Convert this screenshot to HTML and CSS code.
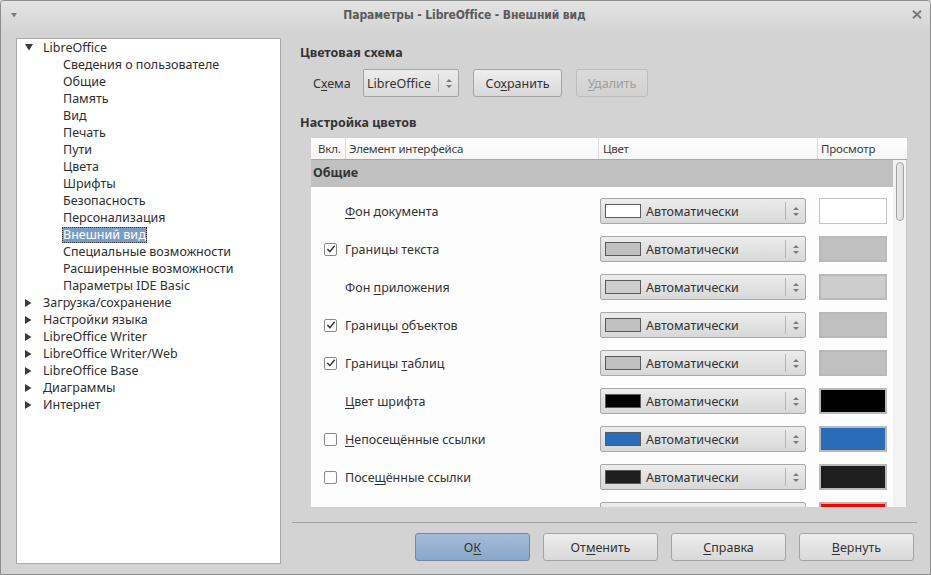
FILE: index.html
```html
<!DOCTYPE html>
<html lang="ru">
<head>
<meta charset="utf-8">
<title>Параметры - LibreOffice - Внешний вид</title>
<link rel="stylesheet" href="styles.css">
</head>
<body>
<div class="window">
  <div class="titlebar">
    <svg class="tb-menu" width="6" height="5" viewBox="0 0 6 5"><path d="M0 0H6L3 4.5Z" fill="#7a7a7a"/></svg>
    <span class="tb-title">Параметры - LibreOffice - Внешний вид</span>
    <svg class="tb-close" width="10" height="9" viewBox="0 0 10 9"><path d="M1 0.8L9 8.2M9 0.8L1 8.2" stroke="#7a7a7a" stroke-width="2"/></svg>
  </div>
  <div class="content">
    <div class="tree">
      <div class="node l0"><span class="tw"><svg width="8" height="7" viewBox="0 0 8 7"><path d="M0 0H8L4 6.5Z" fill="#3c3c3c"/></svg></span>LibreOffice</div>
      <div class="node l1">Сведения о пользователе</div>
      <div class="node l1">Общие</div>
      <div class="node l1">Память</div>
      <div class="node l1">Вид</div>
      <div class="node l1">Печать</div>
      <div class="node l1">Пути</div>
      <div class="node l1">Цвета</div>
      <div class="node l1">Шрифты</div>
      <div class="node l1">Безопасность</div>
      <div class="node l1">Персонализация</div>
      <div class="node l1 sel"><span class="hl">Внешний вид</span></div>
      <div class="node l1">Специальные возможности</div>
      <div class="node l1">Расширенные возможности</div>
      <div class="node l1">Параметры IDE Basic</div>
      <div class="node l0"><span class="tw"><svg width="7" height="8" viewBox="0 0 7 8"><path d="M0 0V8L6.5 4Z" fill="#3c3c3c"/></svg></span>Загрузка/сохранение</div>
      <div class="node l0"><span class="tw"><svg width="7" height="8" viewBox="0 0 7 8"><path d="M0 0V8L6.5 4Z" fill="#3c3c3c"/></svg></span>Настройки языка</div>
      <div class="node l0"><span class="tw"><svg width="7" height="8" viewBox="0 0 7 8"><path d="M0 0V8L6.5 4Z" fill="#3c3c3c"/></svg></span>LibreOffice Writer</div>
      <div class="node l0"><span class="tw"><svg width="7" height="8" viewBox="0 0 7 8"><path d="M0 0V8L6.5 4Z" fill="#3c3c3c"/></svg></span>LibreOffice Writer/Web</div>
      <div class="node l0"><span class="tw"><svg width="7" height="8" viewBox="0 0 7 8"><path d="M0 0V8L6.5 4Z" fill="#3c3c3c"/></svg></span>LibreOffice Base</div>
      <div class="node l0"><span class="tw"><svg width="7" height="8" viewBox="0 0 7 8"><path d="M0 0V8L6.5 4Z" fill="#3c3c3c"/></svg></span>Диаграммы</div>
      <div class="node l0"><span class="tw"><svg width="7" height="8" viewBox="0 0 7 8"><path d="M0 0V8L6.5 4Z" fill="#3c3c3c"/></svg></span>Интернет</div>
    </div>

    <div class="pane">
      <div class="heading">Цветовая схема</div>
      <div class="scheme-row">
        <span class="lbl">С<u>х</u>ема</span>
        <div class="combo">
          <span class="combo-text">LibreOffice</span>
          <span class="spin"><svg width="6" height="11" viewBox="0 0 6 11"><path d="M0 4L3 1L6 4Z M0 7L3 10L6 7Z" fill="#7a7a7a"/></svg></span>
        </div>
        <button class="btn save">Со<u>х</u>ранить</button>
        <button class="btn del" disabled><u>У</u>далить</button>
      </div>
      <div class="heading h2">Настройка цветов</div>

      <div class="table">
        <div class="thead">
          <div class="th c1">Вкл.</div>
          <div class="th c2">Элемент интерфейса</div>
          <div class="th c3">Цвет</div>
          <div class="th c4">Просмотр</div>
        </div>
        <div class="tbody">
          <div class="rows">
            <div class="group">Общие</div>
            <div class="list">
              <div class="row">
                <div class="chk-cell"></div>
                <div class="label"><u>Ф</u>он документа</div>
                <div class="lb"><span class="sw" style="background:#ffffff"></span><span class="lb-text">Автоматически</span><span class="spin"><svg width="6" height="11" viewBox="0 0 6 11"><path d="M0 4L3 1L6 4Z M0 7L3 10L6 7Z" fill="#7a7a7a"/></svg></span></div>
                <div class="pv white" style="background:#ffffff"></div>
              </div>
              <div class="row">
                <div class="chk-cell"><span class="chk on"><svg width="11" height="10" viewBox="0 0 11 10"><path d="M1.5 5L4.3 8L9.5 1.5" fill="none" stroke="#333" stroke-width="1.6"/></svg></span></div>
                <div class="label">Границы текста</div>
                <div class="lb"><span class="sw" style="background:#c0c0c0"></span><span class="lb-text">Автоматически</span><span class="spin"><svg width="6" height="11" viewBox="0 0 6 11"><path d="M0 4L3 1L6 4Z M0 7L3 10L6 7Z" fill="#7a7a7a"/></svg></span></div>
                <div class="pv" style="background:#c0c0c0"></div>
              </div>
              <div class="row">
                <div class="chk-cell"></div>
                <div class="label">Фон <u>п</u>риложения</div>
                <div class="lb"><span class="sw" style="background:#cdcdcd"></span><span class="lb-text">Автоматически</span><span class="spin"><svg width="6" height="11" viewBox="0 0 6 11"><path d="M0 4L3 1L6 4Z M0 7L3 10L6 7Z" fill="#7a7a7a"/></svg></span></div>
                <div class="pv" style="background:#cdcdcd"></div>
              </div>
              <div class="row">
                <div class="chk-cell"><span class="chk on"><svg width="11" height="10" viewBox="0 0 11 10"><path d="M1.5 5L4.3 8L9.5 1.5" fill="none" stroke="#333" stroke-width="1.6"/></svg></span></div>
                <div class="label">Границы <u>о</u>бъектов</div>
                <div class="lb"><span class="sw" style="background:#c0c0c0"></span><span class="lb-text">Автоматически</span><span class="spin"><svg width="6" height="11" viewBox="0 0 6 11"><path d="M0 4L3 1L6 4Z M0 7L3 10L6 7Z" fill="#7a7a7a"/></svg></span></div>
                <div class="pv" style="background:#c0c0c0"></div>
              </div>
              <div class="row">
                <div class="chk-cell"><span class="chk on"><svg width="11" height="10" viewBox="0 0 11 10"><path d="M1.5 5L4.3 8L9.5 1.5" fill="none" stroke="#333" stroke-width="1.6"/></svg></span></div>
                <div class="label">Границы <u>т</u>аблиц</div>
                <div class="lb"><span class="sw" style="background:#c0c0c0"></span><span class="lb-text">Автоматически</span><span class="spin"><svg width="6" height="11" viewBox="0 0 6 11"><path d="M0 4L3 1L6 4Z M0 7L3 10L6 7Z" fill="#7a7a7a"/></svg></span></div>
                <div class="pv" style="background:#c0c0c0"></div>
              </div>
              <div class="row">
                <div class="chk-cell"></div>
                <div class="label"><u>Ц</u>вет шрифта</div>
                <div class="lb"><span class="sw" style="background:#000000"></span><span class="lb-text">Автоматически</span><span class="spin"><svg width="6" height="11" viewBox="0 0 6 11"><path d="M0 4L3 1L6 4Z M0 7L3 10L6 7Z" fill="#7a7a7a"/></svg></span></div>
                <div class="pv" style="background:#000000"></div>
              </div>
              <div class="row">
                <div class="chk-cell"><span class="chk"></span></div>
                <div class="label"><u>Н</u>епосещённые ссылки</div>
                <div class="lb"><span class="sw" style="background:#2a6cb8"></span><span class="lb-text">Автоматически</span><span class="spin"><svg width="6" height="11" viewBox="0 0 6 11"><path d="M0 4L3 1L6 4Z M0 7L3 10L6 7Z" fill="#7a7a7a"/></svg></span></div>
                <div class="pv" style="background:#2a6cb8"></div>
              </div>
              <div class="row">
                <div class="chk-cell"><span class="chk"></span></div>
                <div class="label">Посе<u>щ</u>ённые ссылки</div>
                <div class="lb"><span class="sw" style="background:#1e1e1e"></span><span class="lb-text">Автоматически</span><span class="spin"><svg width="6" height="11" viewBox="0 0 6 11"><path d="M0 4L3 1L6 4Z M0 7L3 10L6 7Z" fill="#7a7a7a"/></svg></span></div>
                <div class="pv" style="background:#1e1e1e"></div>
              </div>
              <div class="row">
                <div class="chk-cell"></div>
                <div class="label"></div>
                <div class="lb"></div>
                <div class="pv" style="background:#ff0000"></div>
              </div>
            </div>
          </div>
          <div class="scrollbar"><div class="thumb"></div></div>
        </div>
      </div>

      <div class="sep"></div>
      <div class="buttons">
        <button class="btn big ok">О<u>К</u></button>
        <button class="btn big">От<u>м</u>енить</button>
        <button class="btn big"><u>С</u>правка</button>
        <button class="btn big"><u>В</u>ернуть</button>
      </div>
    </div>
  </div>
</div>
</body>
</html>
```

FILE: styles.css
```css
* { box-sizing: border-box; }

html, body {
  margin: 0;
  padding: 0;
  background: #d3d3d3;
}

body {
  font-family: "Noto Sans", "Open Sans", "DejaVu Sans", sans-serif;
  font-size: 12.5px;
  color: #333333;
}

u { text-decoration: underline; text-underline-offset: 2px; }

.window {
  width: 931px;
  height: 575px;
  border: 1px solid #8d8d8d;
  border-radius: 4px 4px 0 0;
  background: #d3d3d3;
  display: flex;
  flex-direction: column;
  overflow: hidden;
}

.titlebar {
  height: 28px;
  flex: none;
  display: flex;
  align-items: center;
  background: linear-gradient(#e3e3e3, #d5d5d5);
  padding: 0 8px 0 10px;
}

.tb-menu { flex: none; margin-top: 1px; }

.tb-title {
  flex: 1;
  text-align: center;
  font-family: "DejaVu Sans Condensed", "DejaVu Sans", sans-serif;
  font-stretch: condensed;
  font-weight: bold;
  font-size: 12px;
  color: #5a5a5a;
  letter-spacing: -0.1px;
}

.tb-close { flex: none; margin-top: -1px; }

.content {
  flex: 1;
  display: flex;
  padding: 9px 13px 0 15px;
}

/* tree */
.tree {
  width: 265px;
  height: 526px;
  flex: none;
  background: #ffffff;
  border: 1px solid #a9a9a9;
  color: #2f2f2f;
}

.node {
  height: 17px;
  line-height: 17px;
  white-space: nowrap;
  display: flex;
  align-items: center;
}

.node.l0 { padding-left: 8px; }
.node.l1 { padding-left: 46px; }
.node.sel { padding-left: 45px; }

.tw {
  width: 18px;
  flex: none;
  display: flex;
  align-items: center;
}

.hl {
  background: #7b9cc7;
  color: #ffffff;
  padding: 0 1px;
  outline: 1px dotted #333;
  outline-offset: -1px;
  line-height: 16px;
}

/* right pane */
.pane {
  flex: 1;
  margin-left: 11px;
  display: flex;
  flex-direction: column;
}

.heading {
  font-weight: bold;
  line-height: 16px;
  margin-top: 7px;
  padding-left: 8px;
  color: #333;
}

.heading.h2 { margin-top: 18px; }

.scheme-row {
  margin-top: 8px;
  height: 28px;
  display: flex;
  align-items: center;
  padding-left: 21px;
}

.lbl { width: 50px; flex: none; }

.combo {
  width: 96px;
  height: 28px;
  border: 1px solid #a4a4a4;
  border-radius: 2px;
  background: linear-gradient(#ececec, #dadada);
  display: flex;
  align-items: center;
  margin-right: 14px;
}

.combo-text { flex: 1; padding-left: 3px; }

.combo .spin {
  width: 20px;
  height: 18px;
  border-left: 1px solid #b5b5b5;
  display: flex;
  align-items: center;
  justify-content: center;
}

.btn {
  font-family: inherit;
  font-size: 12.5px;
  color: #333;
  height: 28px;
  border: 1px solid #a5a5a5;
  border-radius: 3px;
  background: linear-gradient(#eeeeee, #d8d8d8);
  padding: 0;
}

.btn.save { width: 89px; margin-right: 14px; }
.btn.del {
  width: 72px;
  color: #9d9d9d;
  border-color: #bdbdbd;
  background: linear-gradient(#dadada, #d2d2d2);
}

/* table */
.table {
  margin-top: 7px;
  margin-left: 19px;
  width: 596px;
  height: 369px;
  display: flex;
  flex-direction: column;
  background: #ffffff;
}

.thead {
  height: 22px;
  flex: none;
  display: flex;
  background: linear-gradient(#ffffff, #f6f6f6);
  border-bottom: 1px solid #a8a8a8;
}

.th {
  line-height: 21px;
  font-size: 11.5px;
  color: #3c3c3c;
  border-right: 1px solid #dadada;
  white-space: nowrap;
  letter-spacing: -0.2px;
}

.th.c1 { width: 35px; padding-left: 7px; }
.th.c2 { width: 253px; padding-left: 3px; }
.th.c3 { width: 219px; padding-left: 4px; }
.th.c4 { flex: 1; padding-left: 3px; border-right: none; }

.tbody {
  flex: 1;
  display: flex;
  overflow: hidden;
}

.rows {
  flex: 1;
  overflow: hidden;
  background: #fdfdfd;
}

.group {
  height: 27px;
  line-height: 26px;
  background: #c0c0c0;
  font-weight: bold;
  padding-left: 2px;
  color: #333;
}

.list { padding-top: 5px; }

.row {
  height: 38px;
  display: grid;
  grid-template-columns: 34px 255px 219px 68px;
  align-items: center;
}

.chk-cell { padding-left: 13px; display: flex; align-items: center; }

.chk {
  width: 13px;
  height: 13px;
  border: 1px solid #8a8a8a;
  border-radius: 2px;
  background: #ffffff;
  display: flex;
  align-items: center;
  justify-content: center;
}

.chk.on svg { margin-top: -1px; margin-left: 1px; }

.label { color: #333; white-space: nowrap; }

.lb {
  width: 206px;
  height: 26px;
  border: 1px solid #a8a8a8;
  border-radius: 2px;
  background: linear-gradient(#ececec, #d8d8d8);
  display: flex;
  align-items: center;
  padding-left: 4px;
}

.sw {
  width: 36px;
  height: 14px;
  border: 1px solid #5a5a5a;
  flex: none;
}

.lb-text { flex: 1; padding-left: 5px; }

.lb .spin {
  width: 20px;
  height: 18px;
  border-left: 1px solid #b5b5b5;
  display: flex;
  align-items: center;
  justify-content: center;
}

.pv {
  width: 68px;
  height: 26px;
  border: 2px solid #b9b9b9;
}

.pv.white { border: 1px solid #c4c4c4; }

.scrollbar {
  width: 14px;
  flex: none;
  background: #f3f3f3;
  padding: 2px 2px 0 3px;
  border-right: 1px solid #c8c8c8;
}

.thumb {
  height: 59px;
  border: 1px solid #a2a2a2;
  border-radius: 4px;
  background: linear-gradient(90deg, #e9e9e9, #dcdcdc);
}

.sep {
  margin-top: 15px;
  height: 1px;
  background: #a3a3a3;
}

.buttons {
  margin-top: 10px;
  display: flex;
  justify-content: flex-end;
  gap: 13px;
  padding-right: 3px;
}

.btn.big { width: 115px; }

.btn.ok {
  background: linear-gradient(#a4bcd9, #89a7ca);
  border-color: #6f89ab;
}
```
